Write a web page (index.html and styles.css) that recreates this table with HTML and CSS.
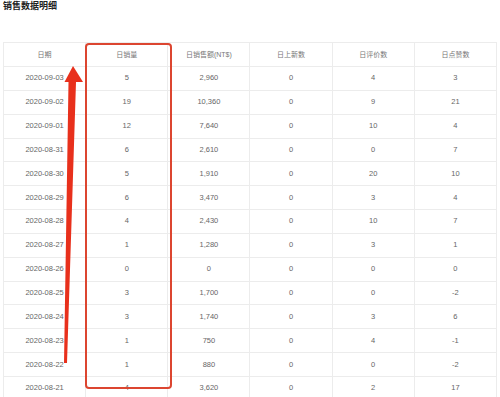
FILE: index.html
```html
<!DOCTYPE html>
<html lang="zh">
<head>
<meta charset="utf-8">
<link rel="stylesheet" href="styles.css">
</head>
<body>
<div class="page">
  <h1 class="title">销售数据明细</h1>
  <div class="table-wrap">
    <table class="data">
      <thead>
        <tr><th>日期</th><th>日销量</th><th>日销售额(NT$)</th><th>日上新数</th><th>日评价数</th><th>日点赞数</th></tr>
      </thead>
      <tbody>
        <tr><td>2020-09-03</td><td>5</td><td>2,960</td><td>0</td><td>4</td><td>3</td></tr>
        <tr><td>2020-09-02</td><td>19</td><td>10,360</td><td>0</td><td>9</td><td>21</td></tr>
        <tr><td>2020-09-01</td><td>12</td><td>7,640</td><td>0</td><td>10</td><td>4</td></tr>
        <tr><td>2020-08-31</td><td>6</td><td>2,610</td><td>0</td><td>0</td><td>7</td></tr>
        <tr><td>2020-08-30</td><td>5</td><td>1,910</td><td>0</td><td>20</td><td>10</td></tr>
        <tr><td>2020-08-29</td><td>6</td><td>3,470</td><td>0</td><td>3</td><td>4</td></tr>
        <tr><td>2020-08-28</td><td>4</td><td>2,430</td><td>0</td><td>10</td><td>7</td></tr>
        <tr><td>2020-08-27</td><td>1</td><td>1,280</td><td>0</td><td>3</td><td>1</td></tr>
        <tr><td>2020-08-26</td><td>0</td><td>0</td><td>0</td><td>0</td><td>0</td></tr>
        <tr><td>2020-08-25</td><td>3</td><td>1,700</td><td>0</td><td>0</td><td>-2</td></tr>
        <tr><td>2020-08-24</td><td>3</td><td>1,740</td><td>0</td><td>3</td><td>6</td></tr>
        <tr><td>2020-08-23</td><td>1</td><td>750</td><td>0</td><td>4</td><td>-1</td></tr>
        <tr><td>2020-08-22</td><td>1</td><td>880</td><td>0</td><td>0</td><td>-2</td></tr>
        <tr><td>2020-08-21</td><td>4</td><td>3,620</td><td>0</td><td>2</td><td>17</td></tr>
      </tbody>
    </table>
    <div class="highlight-box"></div>
    <svg class="arrow" width="500" height="397" viewBox="0 0 500 397">
      <polygon points="64,363 67,363 76,82 83,82 73,66 64.5,82 68.5,82" fill="#e8301c"/>
    </svg>
  </div>
</div>
</body>
</html>
```
FILE: styles.css
```css
html, body {
  margin: 0;
  padding: 0;
  background: #fff;
  overflow: hidden;
}
.page {
  padding: 0 3px;
  font-family: "Liberation Sans", "Noto Sans CJK SC", sans-serif;
}
.title {
  margin: 0;
  font-size: 9px;
  line-height: 12px;
  font-weight: bold;
  color: #222;
  height: 42px;
}
.table-wrap {
  position: relative;
}
.data {
  width: 494px;
  border-collapse: collapse;
  table-layout: fixed;
}
.data th, .data td {
  border: 1px solid #ececec;
  text-align: center;
  font-size: 7.5px;
  line-height: 10px;
  color: #666;
  padding: 0;
  height: 22.85px;
}
.data th {
  font-weight: normal;
  color: #777;
  font-size: 7px;
  height: 23px;
}
.highlight-box {
  position: absolute;
  left: 82px;
  top: 1px;
  width: 83px;
  height: 342px;
  border: 2px solid #dc4530;
  border-radius: 4px;
}
.arrow {
  position: absolute;
  left: -3px;
  top: -42px;
}
```
